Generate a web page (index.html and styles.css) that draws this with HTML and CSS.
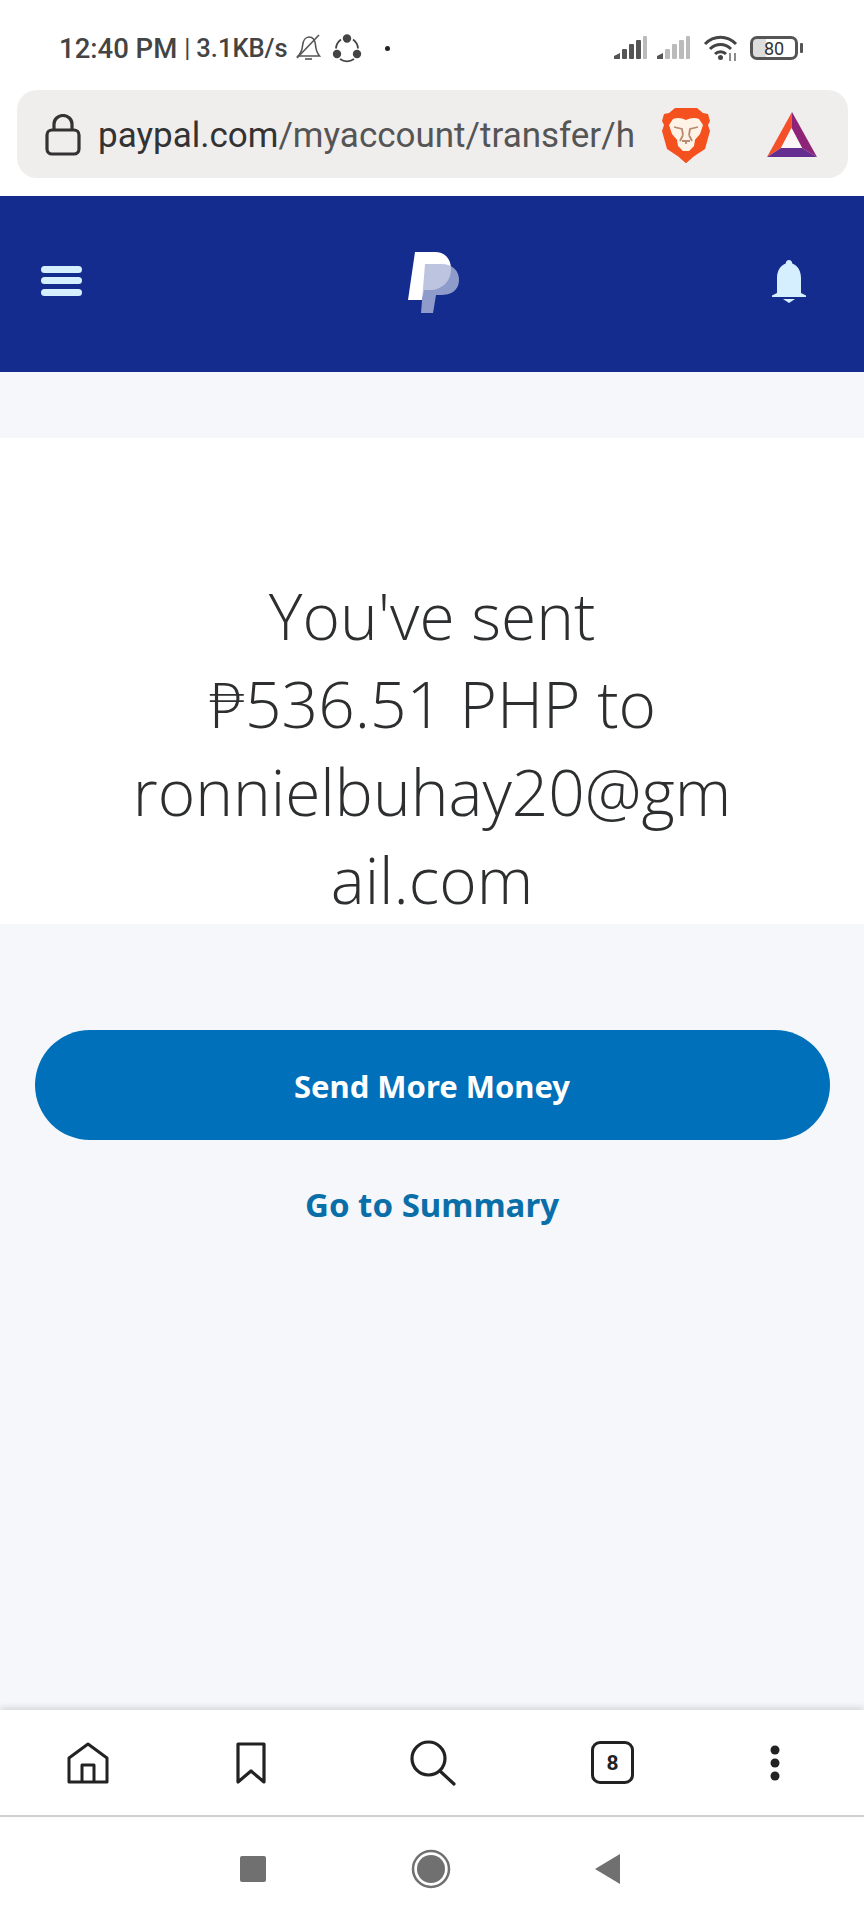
FILE: index.html
```html
<!DOCTYPE html>
<html lang="en">
<head>
    <meta charset="UTF-8">
    <meta name="viewport" content="width=device-width, initial-scale=1.0">
    <title>PayPal - Money sent</title>
    <link rel="stylesheet" href="styles.css">
</head>
<body>
    <div class="browser-top">
        <div class="status-bar">
            <span class="status-time">12:40 PM</span>
            <span class="status-sep">|</span>
            <span class="status-speed">3.1KB/s</span>
            <svg class="icon-mute" width="27" height="28" viewBox="0 0 27 28" fill="none" stroke="#555" stroke-width="1.6">
                <path d="M3 22c3-3 4-5 4.500-10C8 6 11 3 14 3s6 2.500 6.500 8c.4 5 1.500 8 4 11z"/>
                <path d="M10 25h7"/>
                <path d="M24 1 2 24"/>
            </svg>
            <svg class="icon-share" width="30" height="30" viewBox="0 0 30 30" fill="none">
                <path d="M9 6.500a12 12 0 0 0-5 9M21 6.500a12 12 0 0 1 5 9M8 26a12 12 0 0 0 14 0" stroke="#444" stroke-width="1.800"/>
                <circle cx="15" cy="5.500" r="4.200" fill="#444"/>
                <circle cx="5" cy="21" r="4.200" fill="#444"/>
                <circle cx="25" cy="21" r="4.200" fill="#444"/>
            </svg>
            <span class="status-dot"></span>
            <div class="status-right">
                <svg width="33" height="24" viewBox="0 0 33 24" fill="#555">
                    <path d="M0 23v-3l6-3v6z"/>
                    <rect x="8" y="13" width="5" height="10" rx="1"/>
                    <rect x="15" y="8" width="5" height="15" rx="1"/>
                    <rect x="22" y="4" width="5" height="19" rx="1"/>
                    <rect x="29" y="0" width="4" height="23" rx="1" fill="#bbb"/>
                </svg>
                <svg width="33" height="24" viewBox="0 0 33 24" fill="#bbb">
                    <path d="M0 23v-3l6-3v6z" fill="#555"/>
                    <rect x="8" y="13" width="5" height="10" rx="1"/>
                    <rect x="15" y="8" width="5" height="15" rx="1"/>
                    <rect x="22" y="4" width="5" height="19" rx="1"/>
                    <rect x="29" y="0" width="4" height="23" rx="1"/>
                </svg>
                <svg class="icon-wifi" width="35" height="27" viewBox="0 0 35 27" fill="none" stroke="#444" stroke-width="3">
                    <path d="M2 9c9-9 22-9 31 0"/>
                    <path d="M7 14c6-6 15-6 21 0"/>
                    <path d="M12 19c3-3 8-3 11 0"/>
                    <circle cx="17.500" cy="22.500" r="2.500" fill="#444" stroke="none"/>
                    <path d="M27 18v8M32 18v8" stroke-width="1.500" stroke="#666"/>
                </svg>
                <div class="battery">
                    <div class="battery-body"><span class="battery-level">80</span></div>
                    <span class="battery-nub"></span>
                </div>
            </div>
        </div>

        <div class="url-bar">
            <svg class="icon-lock" width="36" height="42" viewBox="0 0 36 42" fill="none" stroke="#333" stroke-width="3.200">
                <rect x="2" y="16" width="32" height="24" rx="5"/>
                <path d="M9 16V10a9 8.500 0 0 1 18 0v6"/>
            </svg>
            <div class="url-text"><span class="url-host">paypal.com</span>/myaccount/transfer/h</div>
            <svg class="icon-brave" width="48" height="56" viewBox="0 0 48 56">
                <path d="M13 1h22l6 5 5 1 2 7-2 4 2 6-5 18-12 8-7 6-7-6-12-8L0 24l2-6-2-4 2-7 5-1z" fill="#f4511e"/>
                <path d="M11 12c4-2 9-1 13 1 4-2 9-3 13-1l4 6-3 9-5 6-1 6-5 5h-6l-5-5-1-6-5-6-3-9z" fill="#fff3e8"/>
                <path d="M12 20l8 2 1 6M36 20l-8 2-1 6M21 28l-3 6M27 28l3 6M20 34h8M24 34v3" fill="none" stroke="#b98a72" stroke-width="1.800"/>
                <path d="M8 26l7 7-3 3zM40 26l-7 7 3 3z" fill="#f4511e"/>
                <path d="M14 42l10 9 10-9-4 9-6 5-6-5z" fill="#f4511e"/>
            </svg>
            <svg class="icon-bat" width="50" height="46" viewBox="0 0 50 46">
                <path d="M25 0 24.500 16 14 36 0 45z" fill="#f4502a"/>
                <path d="M25 0 50 45 35 36 24.500 16z" fill="#8e2478"/>
                <path d="M0 45 14 36H35L50 45z" fill="#662d91"/>
                <path d="M24.500 16 35 36H14z" fill="#fbf5f5"/>
            </svg>
        </div>
    </div>

    <header class="top-nav">
        <svg width="41" height="30" viewBox="0 0 41 30" fill="#d6efff">
            <rect x="0" y="0" width="41" height="7" rx="3.500"/>
            <rect x="0" y="11" width="41" height="7" rx="3.500"/>
            <rect x="0" y="23" width="41" height="7" rx="3.500"/>
        </svg>
        <svg class="logo" width="52" height="62" viewBox="0 0 52 62">
            <path d="M7 0H27C37 0 43 7 43 17 43 30 33 38 22 38H16L14 48H0Z" fill="#fff"/>
            <path d="M17 12H33C45 12 51 19 51 28 51 39 42 43 33 43H28L25 61H13Z" fill="#acb6d9" opacity=".81"/>
        </svg>
        <svg width="36" height="43" viewBox="0 0 36 43" fill="#d6efff">
            <path d="M18 0c2 0 3 1.500 3.300 3.500C27 6 30 11 30 18v15l5 2.500V37H1v-1.500L6 33V18C6 11 9 6 14.700 3.500 15 1.500 16 0 18 0z"/>
            <path d="M12 39h12l-6 4z"/>
        </svg>
    </header>

    <div class="gap-band"></div>

    <section class="message">
        <h1 class="message-title">
            <span class="title-line">You've sent</span>
            <span class="title-line"><span class="peso">₱</span>536.51 PHP to</span>
            <span class="title-line">ronnielbuhay20@gmail.com</span>
        </h1>
    </section>

    <main class="actions">
        <button class="btn-primary">Send More Money</button>
        <a class="link-summary" href="#">Go to Summary</a>
    </main>

    <nav class="toolbar">
        <svg width="42" height="42" viewBox="0 0 42 42" fill="none" stroke="#222" stroke-width="3" stroke-linejoin="round">
            <path d="M2 40V16L21 2l19 14v24z"/>
            <path d="M15 40V23h12v17"/>
        </svg>
        <svg class="tool-bookmark" width="30" height="42" viewBox="0 0 30 42" fill="none" stroke="#222" stroke-width="3.200" stroke-linejoin="round">
            <path d="M2 2h26v38L15 29 2 40z"/>
        </svg>
        <svg class="tool-search" width="46" height="46" viewBox="0 0 46 46" fill="none" stroke="#222" stroke-width="3.200" stroke-linecap="round">
            <circle cx="18.500" cy="18.500" r="16.500"/>
            <path d="M30 31l14 13"/>
        </svg>
        <div class="tab-count">8</div>
        <svg class="tool-more" width="10" height="36" viewBox="0 0 10 36" fill="#222">
            <circle cx="5" cy="5" r="4.500"/>
            <circle cx="5" cy="18" r="4.500"/>
            <circle cx="5" cy="31" r="4.500"/>
        </svg>
    </nav>

    <div class="system-nav">
        <span class="sys-square"></span>
        <svg width="40" height="40" viewBox="0 0 40 40">
            <circle cx="20" cy="20" r="18" fill="none" stroke="#707070" stroke-width="2.500"/>
            <circle cx="20" cy="20" r="14" fill="#707070"/>
        </svg>
        <svg width="26" height="30" viewBox="0 0 26 30" fill="#707070">
            <path d="M25 0v30L0 15z"/>
        </svg>
    </div>
</body>
</html>
```

FILE: styles.css
```css
body {
    margin: 0;
    width: 864px;
    height: 1920px;
    display: flex;
    flex-direction: column;
    background: #f5f7fa;
    font-family: Roboto, sans-serif;
    overflow: hidden;
}

.browser-top {
    flex: none;
    height: 196px;
    background: white;
}

/* status bar */
.status-bar {
    height: 90px;
    display: flex;
    align-items: center;
    padding: 6px 61px 0 59px;
    box-sizing: border-box;
    color: #444;
    font-weight: 500;
}

.status-time {
    font-size: 27.5px;
}

.status-sep {
    margin: 0 6px 0 7px;
    font-size: 25px;
    font-weight: 400;
}

.status-speed {
    font-size: 25.5px;
}

.icon-mute {
    margin-left: 7px;
}

.icon-share {
    margin-left: 10px;
}

.status-dot {
    width: 5px;
    height: 5px;
    margin-left: 23px;
    border-radius: 50%;
    background: #222;
}

.status-right {
    margin-left: auto;
    display: flex;
    align-items: center;
    gap: 10px;
}

.icon-wifi {
    margin: 0 2px 0 3px;
}

.battery {
    display: flex;
    align-items: center;
    gap: 2px;
}

.battery-body {
    width: 48px;
    height: 24px;
    box-sizing: border-box;
    border: 3px solid #555;
    border-radius: 7px;
    display: flex;
    align-items: center;
    justify-content: center;
    background: linear-gradient(90deg, #ddd 30%, white 30%);
}

.battery-level {
    font-size: 18px;
    font-weight: 400;
    color: #333;
}

.battery-nub {
    width: 3px;
    height: 10px;
    background: #555;
    border-radius: 1px;
}

/* address bar */
.url-bar {
    height: 88px;
    margin: 0 16px 0 17px;
    background: #f0eded;
    border-radius: 20px;
    display: flex;
    align-items: center;
    box-sizing: border-box;
    padding: 2px 0 0 28px;
}

.url-text {
    margin-left: 17px;
    font-size: 35px;
    color: #555;
    white-space: nowrap;
}

.url-host {
    color: #333;
}

.icon-brave {
    margin-left: 27px;
}

.icon-bat {
    margin-left: 57px;
}

/* paypal header */
.top-nav {
    height: 176px;
    flex: none;
    box-sizing: border-box;
    background: #142c8e;
    display: flex;
    align-items: center;
    justify-content: space-between;
    padding: 0 57px 6px 41px;
}

.logo {
    margin: 4px 0 0 15px;
}

.gap-band {
    height: 66px;
    flex: none;
}

/* confirmation */
.message {
    height: 486px;
    flex: none;
    background: white;
    padding-top: 134px;
    box-sizing: border-box;
}

.message-title {
    width: 612px;
    margin: 0 auto;
    font-family: "Open Sans", sans-serif;
    font-weight: 300;
    font-size: 64px;
    line-height: 88px;
    color: #2c2e2f;
    text-align: center;
    overflow-wrap: anywhere;
}

.title-line {
    display: block;
}

.peso {
    font-family: Lato, sans-serif;
}

.actions {
    flex: 1;
    display: flex;
    flex-direction: column;
    align-items: center;
    padding-top: 106px;
}

.btn-primary {
    width: 795px;
    height: 110px;
    padding-top: 2px;
    border: none;
    border-radius: 55px;
    background: #0070ba;
    color: white;
    font-family: "Noto Sans", sans-serif;
    font-size: 31px;
    font-weight: 700;
}

.link-summary {
    margin-top: 42px;
    font-family: "Noto Sans", sans-serif;
    font-size: 33px;
    font-weight: 700;
    color: #0a6fa8;
    text-decoration: none;
}

/* browser toolbar */
.toolbar {
    height: 107px;
    flex: none;
    background: white;
    border-bottom: 2px solid #d0d0d0;
    box-sizing: border-box;
    box-shadow: 0 -3px 6px rgba(0, 0, 0, 0.12);
    display: flex;
    align-items: center;
    padding-left: 67px;
    position: relative;
}

.tool-bookmark {
    margin-left: 127px;
}

.tool-search {
    margin-left: 144px;
}

.tab-count {
    width: 43px;
    height: 43px;
    margin-left: 135px;
    box-sizing: border-box;
    border: 3px solid #222;
    border-radius: 9px;
    display: flex;
    align-items: center;
    justify-content: center;
    font-size: 21px;
    font-weight: 700;
    color: #222;
}

.tool-more {
    margin-left: 136px;
}

.system-nav {
    height: 103px;
    flex: none;
    background: white;
    display: flex;
    align-items: center;
    padding: 0 243px 0 240px;
    justify-content: space-between;
}

.sys-square {
    width: 26px;
    height: 26px;
    background: #707070;
    border-radius: 2px;
}
```
